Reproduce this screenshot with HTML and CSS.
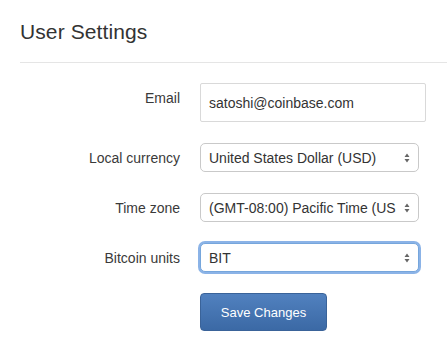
FILE: index.html
```html
<!DOCTYPE html>
<html lang="en">
<head>
<meta charset="utf-8">
<title>User Settings</title>
<link rel="stylesheet" href="styles.css">
</head>
<body>
<div class="page">
  <header class="page-header">
    <h1 class="title">User Settings</h1>
  </header>
  <form class="settings">
    <label class="field-label field-label--top" for="email">Email</label>
    <input id="email" class="text-input" type="text" value="satoshi@coinbase.com">

    <label class="field-label" for="currency">Local currency</label>
    <div class="select-wrap">
      <select id="currency" class="select"><option>United States Dollar (USD)</option></select>
      <svg class="select-arrows" width="6" height="10" viewBox="0 0 6 10"><path d="M0.5 4 L3 0.5 L5.5 4 Z M0.5 6 L3 9.5 L5.5 6 Z" fill="#666"/></svg>
    </div>

    <label class="field-label" for="timezone">Time zone</label>
    <div class="select-wrap">
      <select id="timezone" class="select"><option>(GMT-08:00) Pacific Time (US &amp; Canada)</option></select>
      <svg class="select-arrows" width="6" height="10" viewBox="0 0 6 10"><path d="M0.5 4 L3 0.5 L5.5 4 Z M0.5 6 L3 9.5 L5.5 6 Z" fill="#666"/></svg>
    </div>

    <label class="field-label" for="units">Bitcoin units</label>
    <div class="select-wrap">
      <select id="units" class="select select--focus"><option>BIT</option></select>
      <svg class="select-arrows" width="6" height="10" viewBox="0 0 6 10"><path d="M0.5 4 L3 0.5 L5.5 4 Z M0.5 6 L3 9.5 L5.5 6 Z" fill="#666"/></svg>
    </div>

    <div class="actions">
      <button class="btn-primary" type="button">Save Changes</button>
    </div>
  </form>
</div>
</body>
</html>
```

FILE: styles.css
```css
html, body {
  margin: 0;
  padding: 0;
  background: #fff;
}

body {
  font-family: "Liberation Sans", Arial, sans-serif;
  color: #333;
}

.page {
  padding-left: 20px;
}

.page-header {
  padding-top: 20px;
  padding-bottom: 18px;
  border-bottom: 1px solid #e5e5e5;
}

.title {
  margin: 0;
  font-size: 21px;
  line-height: 24px;
  font-weight: normal;
  letter-spacing: 0.1px;
  color: #333;
}

.settings {
  display: grid;
  grid-template-columns: 160px 226px;
  column-gap: 20px;
  row-gap: 21px;
  padding-top: 20px;
  align-items: center;
}

.field-label {
  text-align: right;
  font-size: 14px;
  line-height: 20px;
  color: #3a3a3a;
}

.field-label--top {
  align-self: start;
  padding-top: 5px;
}

.text-input {
  box-sizing: border-box;
  width: 226px;
  height: 39px;
  margin: 0;
  padding: 0 8px;
  border: 1px solid #d9d9d9;
  border-radius: 2px;
  font-family: "Liberation Sans", Arial, sans-serif;
  font-size: 14px;
  color: #333;
  background: #fff;
  outline: none;
}

.select-wrap {
  position: relative;
  width: 219px;
  height: 29px;
}

.select {
  appearance: none;
  -webkit-appearance: none;
  box-sizing: border-box;
  width: 219px;
  height: 29px;
  margin: 0;
  padding: 0 22px 0 8px;
  border: 1px solid #c9c9c9;
  border-radius: 5px;
  background: #fff;
  font-family: "Liberation Sans", Arial, sans-serif;
  font-size: 14px;
  color: #333;
  outline: none;
}

.select--focus {
  border-color: #76a6dc;
  box-shadow: 0 0 0 2px rgba(110, 160, 225, 0.8);
}

.select-arrows {
  position: absolute;
  right: 9px;
  top: 10px;
  pointer-events: none;
}

.actions {
  grid-column: 2;
}

.btn-primary {
  box-sizing: border-box;
  width: 127px;
  height: 38px;
  margin: 0;
  padding: 0;
  border: 1px solid #3a6399;
  border-radius: 4px;
  background: linear-gradient(#5181bf, #3b69a5);
  color: #fff;
  font-family: "Liberation Sans", Arial, sans-serif;
  font-size: 13px;
  cursor: pointer;
}
```
